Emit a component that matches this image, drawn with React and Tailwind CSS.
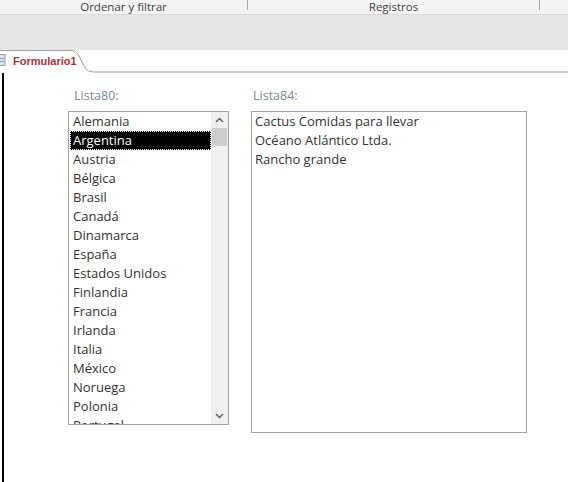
import React from 'react';

const countries = [
  'Alemania', 'Argentina', 'Austria', 'Bélgica', 'Brasil', 'Canadá', 'Dinamarca', 'España',
  'Estados Unidos', 'Finlandia', 'Francia', 'Irlanda', 'Italia', 'México', 'Noruega', 'Polonia', 'Portugal',
];

const customers = ['Cactus Comidas para llevar', 'Océano Atlántico Ltda.', 'Rancho grande'];

export default function App() {
  return (
    <div className="w-[568px] h-[482px] overflow-hidden bg-white flex flex-col" style={{ fontFamily: '"Open Sans", "Noto Sans", sans-serif' }}>
      {/* ribbon group captions */}
      <div className="h-[15px] shrink-0 bg-[#f3f3f3] border-b border-[#dadada] flex text-[11.5px] leading-[14px] text-[#444]">
        <div className="w-[247px] text-center">Ordenar y filtrar</div>
        <div className="w-px h-[10px] bg-[#a8a8a8]" />
        <div className="w-[291px] text-center">Registros</div>
        <div className="w-px h-[10px] bg-[#a8a8a8]" />
      </div>
      <div className="h-[35px] shrink-0 bg-[#e6e6e6]" />

      {/* document tab */}
      <div className="h-[23px] shrink-0 relative bg-white">
        <svg className="absolute inset-0" width="568" height="23">
          <path d="M0 0.5 H72 Q76 0.5 78 4 L85 18 Q88 22 93 22 H568" fill="none" stroke="#a0a0a0" strokeWidth="1" />
          <rect x="-4" y="4.5" width="9" height="11" fill="#dfe6ee" stroke="#8c9db3" />
          <line x1="-2" y1="8.5" x2="4" y2="8.5" stroke="#8c9db3" />
          <line x1="-2" y1="11.5" x2="4" y2="11.5" stroke="#8c9db3" />
        </svg>
        <span className="absolute left-[13px] top-[4px] text-[11px] leading-[14px] font-bold text-[#a4373a]" style={{ fontFamily: '"Liberation Sans", sans-serif' }}>
          Formulario1
        </span>
      </div>

      {/* form body */}
      <div className="flex flex-1 min-h-0">
        <div className="w-[2px] ml-[2px] bg-black shrink-0" />
        <div className="flex gap-[22px] pl-[64px] pt-[14px] items-start">
          <div className="flex flex-col">
            <div className="h-[24px] pl-[6px] text-[12.5px] leading-[18px] text-[#7d8794]">Lista80:</div>
            <div className="w-[161px] h-[314px] border border-[#a0a0a0] flex overflow-hidden text-[13px] text-[#333]">
              <div className="flex-1 flex flex-col overflow-hidden">
                {countries.map((c) =>
                  c === 'Argentina' ? (
                    <div key={c} className="h-[19px] shrink-0 leading-[19px] pl-[3px] ml-[1px] bg-black text-white outline-1 outline-dotted outline-white -outline-offset-1">
                      {c}
                    </div>
                  ) : (
                    <div key={c} className="h-[19px] shrink-0 leading-[19px] pl-[4px]">{c}</div>
                  )
                )}
              </div>
              <div className="w-[17px] bg-[#f0f0f0] flex flex-col items-center shrink-0">
                <svg width="17" height="16" viewBox="0 0 17 16" className="shrink-0">
                  <path d="M5 10 L8.5 6.5 L12 10" fill="none" stroke="#606060" strokeWidth="1.5" />
                </svg>
                <div className="w-[15px] h-[18px] bg-[#cdcdcd]" />
                <div className="flex-1" />
                <svg width="17" height="16" viewBox="0 0 17 16" className="shrink-0">
                  <path d="M5 6 L8.5 9.5 L12 6" fill="none" stroke="#606060" strokeWidth="1.5" />
                </svg>
              </div>
            </div>
          </div>
          <div className="flex flex-col">
            <div className="h-[24px] pl-[2px] text-[12.5px] leading-[18px] text-[#7d8794]">Lista84:</div>
            <div className="w-[276px] h-[322px] border border-[#a0a0a0] text-[13px] text-[#333] pl-[3px]">
              {customers.map((c) => (
                <div key={c} className="h-[19px] leading-[19px]">{c}</div>
              ))}
            </div>
          </div>
        </div>
      </div>
    </div>
  );
}
